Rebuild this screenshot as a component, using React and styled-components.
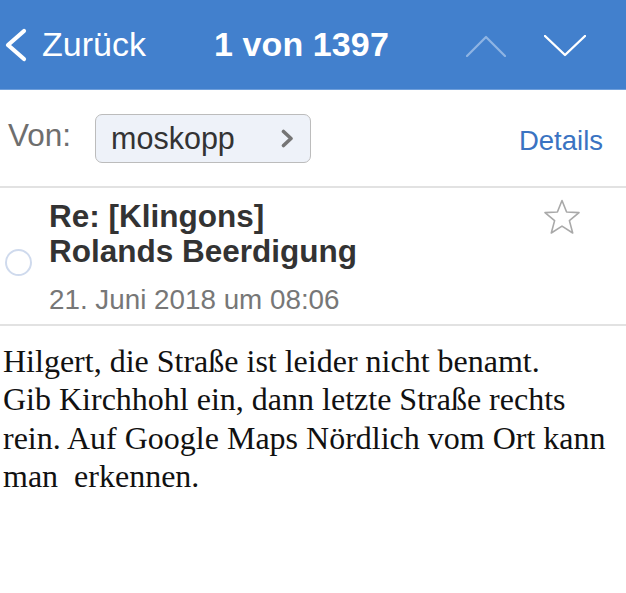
import React from "react";
import styled, { createGlobalStyle } from "styled-components";

const Global = createGlobalStyle`
  html, body { margin: 0; padding: 0; background: #ffffff; }
  body { font-family: "Liberation Sans", Arial, sans-serif; }
`;

const Page = styled.div`
  width: 626px;
  min-height: 593px;
  background: #fff;
  overflow: hidden;
`;

const Header = styled.header`
  height: 89px;
  background: #4280cd;
  border-bottom: 1px solid #6f9fdb;
  display: flex;
  align-items: center;
  color: #fff;
  padding-left: 4px;
  box-sizing: content-box;
`;

const BackButton = styled.div`
  display: flex;
  align-items: center;
  gap: 14px;
  font-size: 34px;
  color: #fff;
  width: 210px;
`;

const Title = styled.div`
  font-size: 34px;
  font-weight: bold;
  letter-spacing: 0.1px;
  flex: 1;
`;

const NavArrows = styled.div`
  display: flex;
  align-items: center;
  gap: 38px;
  padding-right: 40px;
  padding-top: 2px;
`;

const FromRow = styled.div`
  height: 96px;
  display: flex;
  align-items: center;
  padding: 0 23px 0 8px;
  border-bottom: 2px solid #e2e2e2;
`;

const FromLabel = styled.span`
  font-size: 31.5px;
  color: #6e6e6e;
  margin-right: 24px;
  margin-top: -5px;
`;

const SenderPill = styled.div`
  width: 216px;
  height: 49px;
  box-sizing: border-box;
  border: 1.5px solid #bcbcbc;
  border-radius: 7px;
  background: #eef2f9;
  display: flex;
  align-items: center;
  justify-content: space-between;
  padding: 0 16px 0 15px;
  font-size: 30.5px;
  color: #333;
`;

const DetailsLink = styled.span`
  margin-left: auto;
  font-size: 27.5px;
  color: #3a73c2;
  margin-top: 6px;
`;

const SubjectBlock = styled.div`
  position: relative;
  display: flex;
  padding: 11px 0 7px 49px;
  border-bottom: 2px solid #e2e2e2;
`;

const UnreadRing = styled.div`
  position: absolute;
  left: 5px;
  top: 61px;
  width: 27px;
  height: 27px;
  border-radius: 50%;
  border: 2px solid #cfdaed;
  box-sizing: border-box;
`;

const SubjectText = styled.div`
  flex: 1;
  display: flex;
  flex-direction: column;
`;

const Subject = styled.div`
  font-size: 31.5px;
  line-height: 35px;
  font-weight: bold;
  color: #333;
`;

const DateLine = styled.div`
  margin-top: 14px;
  font-size: 27.8px;
  line-height: 34px;
  color: #777;
`;

const StarWrap = styled.div`
  padding: 0 45px 0 0;
  margin-top: 0px;
`;

const Body = styled.div`
  padding: 16px 0 0 3px;
  font-family: "Liberation Serif", "Times New Roman", serif;
  font-size: 32px;
  line-height: 38.3px;
  color: #111;
`;

const BackChevron = () => (
  <svg width="24" height="34" viewBox="0 0 24 34" fill="none">
    <path d="M20 3 L4 17 L20 31" stroke="#fff" strokeWidth="4.2" strokeLinecap="round" strokeLinejoin="round" />
  </svg>
);

const UpChevron = () => (
  <svg width="40" height="22" viewBox="0 0 40 22" fill="none">
    <path d="M1 21 L20 2 L39 21" stroke="#8fb4e3" strokeWidth="2.2" strokeLinecap="round" strokeLinejoin="round" />
  </svg>
);

const DownChevron = () => (
  <svg width="42" height="22" viewBox="0 0 42 22" fill="none">
    <path d="M1 1 L21 20 L41 1" stroke="#fff" strokeWidth="2.4" strokeLinecap="round" strokeLinejoin="round" />
  </svg>
);

const PillChevron = () => (
  <svg width="14" height="19" viewBox="0 0 14 19" fill="none">
    <path d="M3.5 2.5 L11 9.5 L3.5 16.5" stroke="#757575" strokeWidth="3.6" strokeLinecap="round" strokeLinejoin="round" />
  </svg>
);

const Star = () => (
  <svg width="38" height="36" viewBox="0 0 38 36" fill="none">
    <path
      d="M19 1.5 L23.6 13 L36 13.6 L26.4 21.6 L29.7 34 L19 27.1 L8.3 34 L11.6 21.6 L2 13.6 L14.4 13 Z"
      stroke="#a9a9a9"
      strokeWidth="1.6"
      strokeLinejoin="round"
    />
  </svg>
);

export default function App() {
  return (
    <Page>
      <Global />
      <Header>
        <BackButton>
          <BackChevron />
          <span>Zurück</span>
        </BackButton>
        <Title>1 von 1397</Title>
        <NavArrows>
          <UpChevron />
          <DownChevron />
        </NavArrows>
      </Header>
      <FromRow>
        <FromLabel>Von:</FromLabel>
        <SenderPill>
          <span>moskopp</span>
          <PillChevron />
        </SenderPill>
        <DetailsLink>Details</DetailsLink>
      </FromRow>
      <SubjectBlock>
        <UnreadRing />
        <SubjectText>
          <Subject>Re: [Klingons]</Subject>
          <Subject>Rolands Beerdigung</Subject>
          <DateLine>21. Juni 2018 um 08:06</DateLine>
        </SubjectText>
        <StarWrap>
          <Star />
        </StarWrap>
      </SubjectBlock>
      <Body>
        Hilgert, die Straße ist leider nicht benamt.
        <br />
        Gib Kirchhohl ein, dann letzte Straße rechts rein. Auf Google Maps Nördlich vom Ort kann man&nbsp; erkennen.
      </Body>
    </Page>
  );
}
